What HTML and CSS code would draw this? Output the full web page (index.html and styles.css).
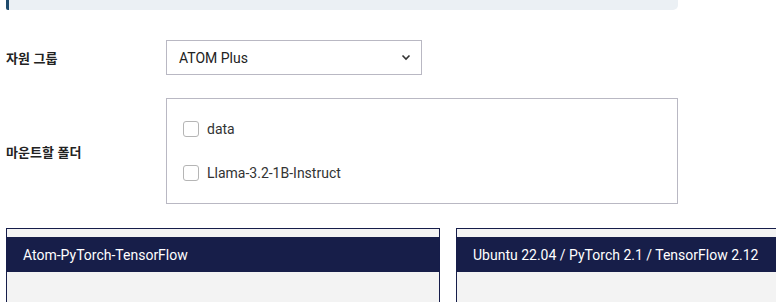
FILE: index.html
```html
<!DOCTYPE html>
<html lang="ko">
<head>
<meta charset="utf-8">
<link rel="stylesheet" href="styles.css">
</head>
<body>
<div class="page">
  <div class="notice"></div>
  <div class="form">
    <div class="row">
      <div class="label">자원 그룹</div>
      <div class="select">
        <span>ATOM Plus</span>
        <svg class="chev" width="10" height="7" viewBox="0 0 10 7"><path d="M1.5 1.5 L5 5 L8.5 1.5" fill="none" stroke="#333" stroke-width="1.6"/></svg>
      </div>
    </div>
    <div class="row">
      <div class="label">마운트할 폴더</div>
      <div class="checks">
        <label class="check"><span class="box"></span><span>data</span></label>
        <label class="check"><span class="box"></span><span>Llama-3.2-1B-Instruct</span></label>
      </div>
    </div>
  </div>
  <div class="cards">
    <div class="card"><div class="card-head">Atom-PyTorch-TensorFlow</div></div>
    <div class="card"><div class="card-head">Ubuntu 22.04 / PyTorch 2.1 / TensorFlow 2.12</div></div>
  </div>
</div>
</body>
</html>
```
FILE: styles.css
```css
html, body {
  margin: 0;
  padding: 0;
  background: #fff;
  overflow: hidden;
}
body {
  font-family: Roboto, "Noto Sans CJK KR", sans-serif;
  color: #222;
  width: 776px;
  height: 302px;
}
.page {
  padding-left: 6px;
}
.notice {
  width: 669px;
  height: 10px;
  background: #ebf0f4;
  border-left: 3px solid #1e4a6c;
  border-radius: 0 0 5px 2px;
}
.form {
  display: flex;
  flex-direction: column;
  gap: 23px;
  margin-top: 30px;
}
.row {
  display: flex;
  align-items: center;
}
.label {
  width: 160px;
  font-size: 13px;
  font-weight: 700;
  font-family: "Noto Sans CJK KR", sans-serif;
  color: #222;
}
.select {
  width: 256px;
  height: 35px;
  box-sizing: border-box;
  border: 1px solid #b9b8c3;
  display: flex;
  align-items: center;
  justify-content: space-between;
  padding: 0 10px 0 12px;
  font-size: 14px;
  color: #222;
}
.chev {
  display: block;
}
.checks {
  width: 512px;
  height: 106px;
  box-sizing: border-box;
  border: 1px solid #b9b8c3;
  padding: 22px 16px;
  display: flex;
  flex-direction: column;
  gap: 28px;
}
.check {
  display: flex;
  align-items: center;
  gap: 8px;
  height: 16px;
  font-size: 14px;
  color: #333;
}
.box {
  width: 16px;
  height: 16px;
  box-sizing: border-box;
  border: 1px solid #b5b5b5;
  border-radius: 3px;
  background: #fff;
}
.cards {
  display: flex;
  gap: 16px;
  margin-top: 24px;
  width: 770px;
  overflow: hidden;
}
.card {
  flex: 0 0 434px;
  box-sizing: border-box;
  height: 74px;
  border: 1px solid #161d4a;
  border-bottom: none;
  background: #f3f3f3;
  padding-top: 8px;
}
.card-head {
  height: 35px;
  background: #171e49;
  color: #fff;
  font-size: 14px;
  display: flex;
  align-items: center;
  padding-left: 16px;
}
```
